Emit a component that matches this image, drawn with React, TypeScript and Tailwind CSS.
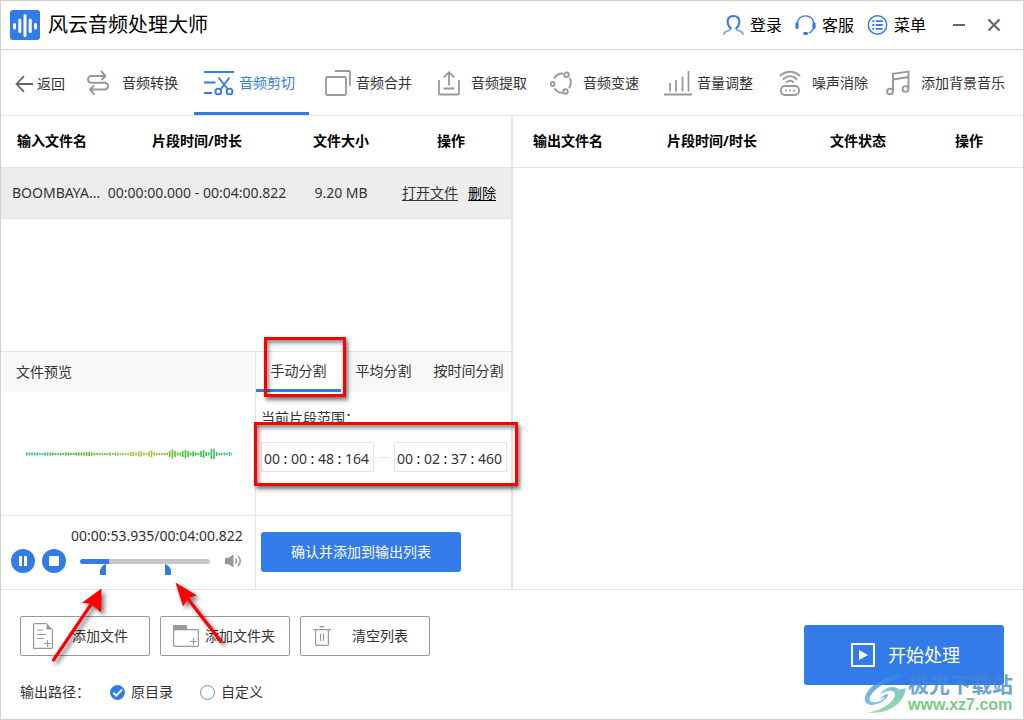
import React from "react";

const DURATION = 240.822;
const POSITION = 53.935;
const RANGE_START = 48.164;
const RANGE_END = 157.46;

const percent = (seconds: number) => (seconds / DURATION) * 100;

const WAVE = [
    3, 3, 3, 3, 3, 2, 2, 3, 3, 3, 3, 2, 2, 2, 2, 3, 3, 2, 2, 3,
    3, 3, 3, 4, 4, 3, 3, 2, 2, 2, 2, 2, 3, 2, 3, 3, 2, 2, 2, 2,
    4, 4, 3, 5, 5, 3, 2, 5, 7, 3, 2, 2, 2, 2, 2, 6, 9, 6, 3, 3,
    6, 8, 6, 3, 5, 3, 2, 6, 8, 4, 3, 10, 10, 4, 2, 2, 3, 2, 4, 3,
];

/* ---------- icons ---------- */

function LogoIcon() {
    return (
        <svg width="30" height="30" viewBox="0 0 30 30" aria-hidden="true">
            <rect width="30" height="30" rx="3" fill="#347bea" />
            <path
                d="M4.500 14.500v3.500M9.800 10v11.500M15 5.500v20M20.200 10v11.500M25.500 14.500v3.500"
                stroke="#fff" strokeWidth="3" strokeLinecap="round"
            />
        </svg>
    );
}

function UserIcon() {
    return (
        <svg width="21" height="20" viewBox="0 0 21 20" fill="none" stroke="#347bea" strokeLinecap="round" aria-hidden="true">
            <path d="M7.600 13.100C5.700 11.500 4.700 9.300 4.700 6.700C4.700 3 7.200 1 10.500 1s5.800 2 5.800 5.700c0 2.600-1 4.800-2.900 6.400" strokeWidth="2" />
            <path d="M7.800 13.200c0 2-1.500 2.100-3.300 2.700C2.500 16.500 1.300 17.300 1 19" strokeWidth="1.800" opacity="0.65" />
            <path d="M13.200 13.200c0 2 1.500 2.100 3.300 2.700c2 .6 3.200 1.400 3.500 3.100" strokeWidth="1.800" opacity="0.65" />
        </svg>
    );
}

function HeadsetIcon() {
    return (
        <svg width="21" height="20" viewBox="0 0 21 20" fill="none" stroke="#347bea" aria-hidden="true">
            <path d="M2.300 8C3 3.500 6.200 .8 10.500 .8S18 3.500 18.700 8" strokeWidth="1.200" />
            <path d="M2 8.800v3.600M19 8.800v3.600" strokeWidth="3.200" strokeLinecap="round" />
            <path d="M18.600 13c-.8 2.600-2.400 4.200-5 5" strokeWidth="1.200" />
            <path d="M9.600 18.500h2" strokeWidth="2.800" strokeLinecap="round" />
        </svg>
    );
}

function MenuIcon() {
    return (
        <svg width="21" height="20" viewBox="0 0 21 20" fill="none" stroke="#347bea" aria-hidden="true">
            <circle cx="10.500" cy="10" r="9.200" strokeWidth="1.500" />
            <path d="M5.300 6.200h2M5.300 10h2M5.300 13.800h2M8.700 6.200h7M8.700 10h7M8.700 13.800h7" strokeWidth="1.800" />
        </svg>
    );
}

function BackIcon() {
    return (
        <svg width="18" height="18" viewBox="0 0 18 18" fill="none" stroke="#666" strokeWidth="1.800" aria-hidden="true">
            <path d="M9 1.200L1.500 9L9 16.800M1.500 9H18" />
        </svg>
    );
}

function ConvertIcon() {
    return (
        <svg width="22" height="26" viewBox="0 0 22 26" fill="none" stroke="#999" strokeWidth="1.900" strokeLinecap="round" strokeLinejoin="round" aria-hidden="true">
            <path d="M14.500 1.500L18.500 6L15 9.500M18 6H4.300a3.300 3.300 0 0 0 0 6.700H17.700a3.400 3.400 0 0 1 0 6.800H3.500M6.500 16L3 19.500L7 24" />
        </svg>
    );
}

function CutIcon() {
    return (
        <svg width="30" height="26" viewBox="0 0 30 26" fill="none" stroke="#347bea" strokeWidth="1.900" aria-hidden="true">
            <path d="M0 2H30M0 12.500H11.500M0 23H8" />
            <path d="M14.500 7.500L24 19.500M25.500 7.500L16.500 19.500" />
            <circle cx="14.300" cy="21.500" r="2.900" />
            <circle cx="25.500" cy="21.500" r="2.900" />
        </svg>
    );
}

function MergeIcon() {
    return (
        <svg width="26" height="26" viewBox="0 0 26 26" fill="none" stroke="#999" strokeWidth="1.800" aria-hidden="true">
            <rect x="1" y="7" width="20" height="18" rx="1.500" />
            <path d="M10 1H24.200a.8 .8 0 0 1 .8 .8V16" />
        </svg>
    );
}

function ExtractIcon() {
    return (
        <svg width="22" height="26" viewBox="0 0 22 26" fill="none" stroke="#999" strokeWidth="1.800" aria-hidden="true">
            <path d="M1 10V23.500a1 1 0 0 0 1 1H20a1 1 0 0 0 1-1V10M11 15.500V2.200M5.800 7.500L11 2.200L16.200 7.500M5.500 18.500H16.500" />
        </svg>
    );
}

function SpeedIcon() {
    return (
        <svg width="22" height="24" viewBox="0 0 22 24" fill="none" stroke="#999" strokeWidth="1.800" aria-hidden="true">
            <path d="M4 7.500C6 4 9.200 2.500 13 2.500M19.800 6.800c1.400 3.300 1.300 7.300-.8 10.400M4.500 17.200c1.800 3 4.800 4.800 8.300 4.600" />
            <circle cx="16.500" cy="3.700" r="2.300" />
            <circle cx="2.600" cy="13" r="2" />
            <circle cx="15.500" cy="20.500" r="2.300" />
        </svg>
    );
}

function VolumeBarsIcon() {
    return (
        <svg width="28" height="26" viewBox="0 0 28 26" fill="none" stroke="#999" strokeWidth="1.800" aria-hidden="true">
            <path d="M0 24.500H28M6 13V21.500M12 10V21.500M18.500 6.500V21.500M24.500 1V21.500" />
        </svg>
    );
}

function NoiseIcon() {
    return (
        <svg width="22" height="26" viewBox="0 0 22 26" fill="none" stroke="#999" strokeWidth="1.900" strokeLinecap="round" aria-hidden="true">
            <rect x="2" y="16" width="18" height="9" rx="4" />
            <path d="M1.500 5.500C7 .5 15 .5 20.500 5.500M4.500 9c3.800-3.800 9.200-3.800 13 0M7.800 12c2-1.600 4.400-1.600 6.400 0" />
            <path d="M7 20.500h.1M11 20.500h.1M15 20.500h.1" strokeWidth="2" />
        </svg>
    );
}

function MusicIcon() {
    return (
        <svg width="24" height="26" viewBox="0 0 24 26" fill="none" stroke="#999" strokeWidth="1.900" aria-hidden="true">
            <path d="M7 21.500V3.800L22.500 1.500V19M7 9.500L22.500 7" />
            <circle cx="4" cy="21.500" r="2.900" />
            <circle cx="19.500" cy="19" r="2.900" />
        </svg>
    );
}

function SpeakerIcon() {
    return (
        <svg width="17" height="14" viewBox="0 0 17 14" fill="none" stroke="#999" strokeWidth="1.500" aria-hidden="true">
            <path d="M0 4H3L8.500 .5V13.500L3 10H0Z" fill="#999" stroke="none" />
            <path d="M10.500 4.500c1.300 1.500 1.300 3.500 0 5M13 2c3 3 3 7 0 10" />
        </svg>
    );
}

function AddFileIcon() {
    return (
        <svg width="20" height="26" viewBox="0 0 20 26" fill="none" stroke="#999" strokeWidth="1.200" aria-hidden="true">
            <path d="M13.500 .6H1.600a1 1 0 0 0-1 1V24.400a1 1 0 0 0 1 1H18.400a1 1 0 0 0 1-1V6.500" />
            <path d="M13.500 .3V6.500H19.700Z" fill="#999" stroke="none" />
            <path d="M4 7H10M4 11.500H13M4 15.500H11M11 20.500H18M14.500 17V24" />
        </svg>
    );
}

function AddFolderIcon() {
    return (
        <svg width="26" height="22" viewBox="0 0 26 22" fill="none" stroke="#999" strokeWidth="1.200" aria-hidden="true">
            <path d="M0 5V1a1 1 0 0 1 1-1H13a1 1 0 0 1 1 1V5Z" fill="#999" stroke="none" />
            <path d="M.6 4.600H24.400a1 1 0 0 1 1 1V20.400a1 1 0 0 1-1 1H1.600a1 1 0 0 1-1-1ZM17 16.500H24M20.500 13V20" />
        </svg>
    );
}

function TrashIcon() {
    return (
        <svg width="18" height="20" viewBox="0 0 18 20" fill="none" stroke="#999" strokeWidth="1.200" aria-hidden="true">
            <path d="M0 3.600H18M6.500 .6H11.500M2.600 3.600V18.400a1 1 0 0 0 1 1H14.400a1 1 0 0 0 1-1V3.600M7.500 7.500V15M10.500 7.500V15" />
        </svg>
    );
}

/* ---------- sections ---------- */

const tools = [
    { label: "音频转换", Icon: ConvertIcon, box: "w-[115px] pl-2 gap-[13px]" },
    { label: "音频剪切", Icon: CutIcon, box: "w-[115px] pl-2.5 gap-[5px]", active: true },
    { label: "音频合并", Icon: MergeIcon, box: "w-[115px] pl-4 gap-[5px]" },
    { label: "音频提取", Icon: ExtractIcon, box: "w-[115px] pl-3.5 gap-[11px]" },
    { label: "音频变速", Icon: SpeedIcon, box: "w-[115px] pl-[11px] gap-[11px]" },
    { label: "音量调整", Icon: VolumeBarsIcon, box: "w-[115px] pl-2.5 gap-[5px]" },
    { label: "噪声消除", Icon: NoiseIcon, box: "w-[115px] pl-2.5 gap-[11px]" },
    { label: "添加背景音乐", Icon: MusicIcon, box: "flex-1 pl-0.5 gap-[11px]" },
];

function TitleBar() {
    const links = [
        { label: "登录", Icon: UserIcon },
        { label: "客服", Icon: HeadsetIcon },
        { label: "菜单", Icon: MenuIcon },
    ];
    return (
        <header className="flex h-[49px] items-center border-b border-[#d6d6d6] pl-[9px] pr-[22px] text-black">
            <LogoIcon />
            <h1 className="ml-2 flex-1 whitespace-nowrap text-[20px] leading-6">风云音频处理大师</h1>
            <div className="flex items-center gap-[13px]">
                {links.map(({ label, Icon }) => (
                    <button key={label} className="flex items-center gap-1.5 whitespace-nowrap text-base leading-6">
                        <Icon />
                        {label}
                    </button>
                ))}
            </div>
            <button aria-label="最小化" className="ml-[26px]">
                <svg width="14" height="14" viewBox="0 0 14 14" stroke="#6b6470" strokeWidth="2"><path d="M1 7H13" /></svg>
            </button>
            <button aria-label="关闭" className="ml-[21px]">
                <svg width="14" height="14" viewBox="0 0 14 14" stroke="#6b6470" strokeWidth="2.200"><path d="M1.500 1.500L12.500 12.500M12.500 1.500L1.500 12.500" /></svg>
            </button>
        </header>
    );
}

function Toolbar() {
    return (
        <nav className="flex h-[66px] border-b border-[#e4e4e4] text-[#333]">
            <button className="flex w-[78px] items-center gap-1 whitespace-nowrap pl-3.5 pt-0.5">
                <BackIcon />
                返回
            </button>
            {tools.map(({ label, Icon, box, active }) => (
                <button
                    key={label}
                    className={`flex items-center whitespace-nowrap border-b-3 pt-1 ${box} ${active ? "border-[#347bea] text-[#347bea]" : "border-transparent"}`}
                >
                    <Icon />
                    {label}
                </button>
            ))}
        </nav>
    );
}

function InputTable() {
    return (
        <table className="w-full table-fixed border-collapse text-center">
            <thead>
                <tr className="h-[51px] border-b border-[#e4e4e4] text-black">
                    <th className="w-[102px]">输入文件名</th>
                    <th className="w-[188px]">片段时间/时长</th>
                    <th className="w-[100px]">文件大小</th>
                    <th className="w-[120px]">操作</th>
                </tr>
            </thead>
            <tbody>
                <tr className="h-[51px] whitespace-nowrap border-b border-[#e0e0e0] bg-[#ededed]">
                    <td className="pl-[11px] text-left">BOOMBAYA...</td>
                    <td>00:00:00.000 - 00:04:00.822</td>
                    <td>9.20 MB</td>
                    <td className="pr-1">
                        <a href="#open" className="mr-2.5 underline underline-offset-2">打开文件</a>
                        <a href="#delete" className="text-black underline underline-offset-2">删除</a>
                    </td>
                </tr>
            </tbody>
        </table>
    );
}

function OutputTable() {
    return (
        <table className="w-full table-fixed border-collapse text-center">
            <thead>
                <tr className="h-[51px] border-b border-[#e4e4e4] text-black">
                    <th className="w-[110px]">输出文件名</th>
                    <th className="w-[178px]">片段时间/时长</th>
                    <th className="w-[114px]">文件状态</th>
                    <th className="w-[108px]">操作</th>
                </tr>
            </thead>
        </table>
    );
}

function Waveform() {
    return (
        <svg width="207" height="14" viewBox="0 0 207 14" aria-label="波形">
            {WAVE.map((h, i) => {
                const t = i / (WAVE.length - 1);
                const hue = t < 0.55 ? 160 - (t / 0.55) * 95 : 65 + ((t - 0.55) / 0.45) * 95;
                return <rect key={i} x={1 + i * 2.6} y={7 - h / 2} width="1.6" height={h} fill={`hsl(${hue} 60% 48%)`} />;
            })}
        </svg>
    );
}

function Player() {
    const played = percent(POSITION);
    return (
        <div className="h-[73px] pl-2.5 pt-2.5">
            <p className="pl-[60px] leading-5">00:00:53.935/00:04:00.822</p>
            <div className="mt-[3px] flex items-center">
                <button aria-label="暂停" className="flex size-6 shrink-0 items-center justify-center gap-[2px] rounded-full bg-[#347bea]">
                    <span className="h-2.5 w-[3px] bg-white" />
                    <span className="h-2.5 w-[3px] bg-white" />
                </button>
                <button aria-label="停止" className="ml-[7px] flex size-6 shrink-0 items-center justify-center rounded-full bg-[#347bea]">
                    <span className="size-2.5 rounded-[1px] bg-white" />
                </button>
                <div className="relative ml-3.5 h-6 w-[130px]">
                    <input
                        type="range"
                        aria-label="播放进度"
                        min={0}
                        max={DURATION}
                        step="any"
                        defaultValue={POSITION}
                        className="mt-2.5 block h-[5px] w-full appearance-none rounded-full [&::-webkit-slider-thumb]:appearance-none"
                        style={{ background: `linear-gradient(to right, #347bea ${played}%, #c6c6c6 ${played}%)` }}
                    />
                    <svg
                        width="6" height="11" viewBox="0 0 6 11"
                        className="absolute top-[15px] -translate-x-full"
                        style={{ left: `${percent(RANGE_START)}%` }}
                    >
                        <path d="M6 0V11H0V6Q2 1 6 0Z" fill="#347bea" />
                    </svg>
                    <svg
                        width="6" height="11" viewBox="0 0 6 11"
                        className="absolute top-[15px]"
                        style={{ left: `${percent(RANGE_END)}%` }}
                    >
                        <path d="M0 0V11H6V6Q4 1 0 0Z" fill="#347bea" />
                    </svg>
                </div>
                <button aria-label="音量" className="ml-[15px]">
                    <SpeakerIcon />
                </button>
            </div>
        </div>
    );
}

function TimeField({ name, parts }: { name: string; parts: string[] }) {
    return (
        <div role="group" aria-label={name} className="flex h-[30px] items-center border border-[#e4e4e4] px-[2px] pt-[3px]">
            {parts.map((part, i) => (
                <React.Fragment key={i}>
                    {i > 0 && <span className="w-[11px] text-center text-black">:</span>}
                    <input
                        aria-label={`${name} ${["时", "分", "秒", "毫秒"][i]}`}
                        defaultValue={part}
                        className={`bg-transparent outline-none ${i === 3 ? "w-[26px]" : "w-4"}`}
                    />
                </React.Fragment>
            ))}
        </div>
    );
}

function SplitPanel() {
    return (
        <section className="relative flex w-1/2 flex-col">
            <div role="tablist" className="grid h-10 grid-cols-3 bg-[#f8f8f8]">
                <button role="tab" aria-selected="true" className="border-b-3 border-[#347bea] bg-white">手动分割</button>
                <button role="tab" aria-selected="false" className="border-b-3 border-transparent">平均分割</button>
                <button role="tab" aria-selected="false" className="border-b-3 border-transparent">按时间分割</button>
            </div>
            <div className="h-[123px] pl-[5px] pt-4">
                <p className="leading-5">当前片段范围：</p>
                <div className="mt-3.5 flex items-center">
                    <TimeField name="开始" parts={["00", "00", "48", "164"]} />
                    <span className="mx-[5px] w-2.5 border-t border-[#e4e4e4]" />
                    <TimeField name="结束" parts={["00", "02", "37", "460"]} />
                </div>
            </div>
            <div className="h-[74px] border-t border-[#e4e4e4] pl-[5px] pt-4">
                <button className="h-10 w-[200px] rounded-[3px] bg-[#347bea] text-white">确认并添加到输出列表</button>
            </div>

            {/* highlight frames over the tab and the time range */}
            <div className="pointer-events-none absolute left-2 -top-[15px] h-[60px] w-[82px] border-3 border-[#f00] shadow-[2px_3px_4px_rgba(0,0,0,0.55),inset_2px_3px_4px_rgba(0,0,0,0.45)]" />
            <div className="pointer-events-none absolute -left-[2px] top-[70px] h-16 w-[264px] border-3 border-[#f00] shadow-[2px_3px_4px_rgba(0,0,0,0.55),inset_2px_3px_4px_rgba(0,0,0,0.45)]" />
        </section>
    );
}

function Arrows() {
    return (
        <svg
            width="190" height="96" viewBox="48 578 190 96"
            className="pointer-events-none absolute left-[47px] -top-3 drop-shadow-[3px_3px_2px_rgba(0,0,0,0.5)]"
            fill="#f00" stroke="#f00" aria-hidden="true"
        >
            <path d="M53.500 660L94 600M221 641.500L185 595" strokeWidth="3.200" strokeLinecap="round" />
            <path d="M101.500 588.500L82 602.700L91 604L101.200 612.500ZM175.500 582.500L197 595.500L188.500 598L183 606.500Z" stroke="none" />
        </svg>
    );
}

function Watermark() {
    return (
        <div className="pointer-events-none absolute bottom-1 right-2.5 flex items-center gap-px whitespace-nowrap">
            <svg width="43" height="41" viewBox="12 14 130 124" opacity="0.8" aria-hidden="true">
                <defs>
                    <linearGradient id="swirl" x1="0" y1="0" x2="0" y2="1">
                        <stop offset="0" stopColor="#2f8fd8" />
                        <stop offset="1" stopColor="#62b0e0" />
                    </linearGradient>
                    <linearGradient id="swirlLow" x1="0" y1="0" x2="0" y2="1">
                        <stop offset="0" stopColor="#5fb0d4" />
                        <stop offset="0.5" stopColor="#74c79a" />
                        <stop offset="1" stopColor="#86d28c" />
                    </linearGradient>
                </defs>
                <path
                    d="M138 18C85 14 25 45 15 85C11 102 25 110 42 107C60 104 80 92 86 76C74 74 64 82 60 92C66 86 72 84 76 84C68 94 52 100 40 99C28 98 26 90 32 80C46 52 90 34 138 18Z"
                    fill="url(#swirl)"
                />
                <path
                    d="M138 56C134 104 84 136 24 131C66 124 104 98 106 76C106 62 84 60 60 76C74 52 108 46 118 62C126 60 132 58 138 56Z"
                    fill="url(#swirlLow)"
                />
            </svg>
            <div className="flex flex-col font-bold">
                <span className="text-[21px] leading-[22px] text-[#4389d2]/80">极光下载站</span>
                <span className="font-['Liberation_Sans',sans-serif] text-base leading-5 text-[#79cb86]">www.xz7.com</span>
            </div>
        </div>
    );
}

function PathOption({ label, checked }: { label: string; checked?: boolean }) {
    return (
        <label className="flex items-center gap-1.5">
            <span className="relative flex">
                <input
                    type="radio"
                    name="output-path"
                    defaultChecked={checked}
                    className="peer size-[15px] appearance-none rounded-full border border-[#888] bg-white checked:border-[#347bea] checked:bg-[#347bea]"
                />
                <svg
                    viewBox="0 0 15 15" fill="none" stroke="#fff" strokeWidth="2"
                    className="pointer-events-none absolute inset-0 hidden size-[15px] peer-checked:block"
                >
                    <path d="M3.200 7.800L6.200 10.600L12 4.600" />
                </svg>
            </span>
            {label}
        </label>
    );
}

function Footer() {
    return (
        <footer className="relative flex h-[130px] justify-between border-t border-[#e4e4e4] px-[19px]">
            <div className="pt-[26px]">
                <div className="flex gap-2.5">
                    <button className="flex h-10 w-[130px] items-center rounded-[2px] border border-[#999] pl-3">
                        <AddFileIcon />
                        <span className="ml-[19px]">添加文件</span>
                    </button>
                    <button className="flex h-10 w-[130px] items-center rounded-[2px] border border-[#999] pl-3">
                        <AddFolderIcon />
                        <span className="ml-1.5">添加文件夹</span>
                    </button>
                    <button className="flex h-10 w-[130px] items-center rounded-[2px] border border-[#999] pl-3">
                        <TrashIcon />
                        <span className="ml-[21px]">清空列表</span>
                    </button>
                </div>
                <div className="mt-[26px] flex items-center leading-5">
                    <span className="w-[90px]">输出路径：</span>
                    <div className="flex gap-[27px]">
                        <PathOption label="原目录" checked />
                        <PathOption label="自定义" />
                    </div>
                </div>
            </div>
            <button className="mt-[35px] flex h-[60px] w-[200px] items-center rounded-[3px] bg-[#347bea] pl-[47px] text-lg text-white">
                <svg width="24" height="24" viewBox="0 0 24 24" fill="none" aria-hidden="true">
                    <rect x="1" y="1" width="22" height="22" stroke="#fff" strokeWidth="2" />
                    <path d="M8 7V17L17 12Z" fill="#fff" />
                </svg>
                <span className="ml-[13px]">开始处理</span>
            </button>
            <Arrows />
            <Watermark />
        </footer>
    );
}

export default function App() {
    return (
        <div className="flex min-h-screen flex-col overflow-hidden border border-[#d0d0d0] bg-white font-['Noto_Sans','Noto_Sans_CJK_SC',sans-serif] text-sm text-[#333]">
            <TitleBar />
            <Toolbar />
            <main className="flex flex-1">
                <div className="flex flex-1 flex-col border-r-2 border-[#e4e4e4]">
                    <div className="flex-1">
                        <InputTable />
                    </div>
                    <div className="flex border-t border-[#e4e4e4]">
                        <section className="flex w-1/2 flex-col border-r border-[#e4e4e4]">
                            <h2 className="flex h-10 items-center bg-[#f8f8f8] pl-[15px]">文件预览</h2>
                            <div className="flex h-[124px] items-center border-b border-[#e4e4e4] pl-6">
                                <Waveform />
                            </div>
                            <Player />
                        </section>
                        <SplitPanel />
                    </div>
                </div>
                <div className="flex-1">
                    <OutputTable />
                </div>
            </main>
            <Footer />
        </div>
    );
}
